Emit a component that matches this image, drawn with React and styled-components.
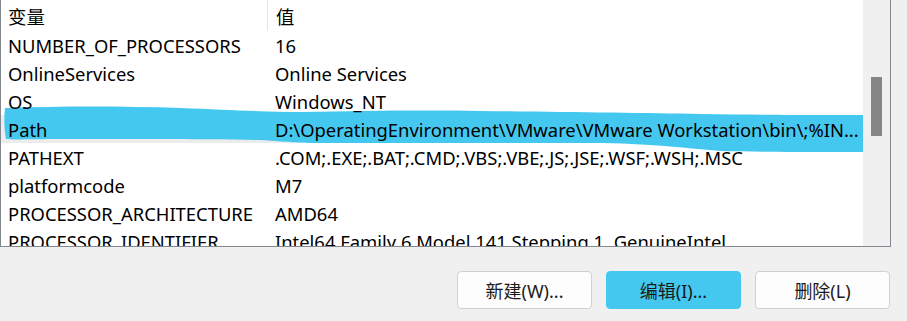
import React from 'react';
import styled, { createGlobalStyle } from 'styled-components';

const GlobalStyle = createGlobalStyle`
    body {
        margin: 0;
        background: #f0f0f0;
        font-family: "Noto Sans", "Noto Sans CJK SC", sans-serif;
        color: #000;
    }
`;

const Window = styled.div`
    display: flex;
    flex-direction: column;
    width: 907px;
    height: 321px;
    overflow: hidden;
    background: #f0f0f0;
`;

const ListBox = styled.div`
    display: flex;
    width: 891px;
    height: 247px;
    box-sizing: border-box;
    border: 1px solid #828790;
    border-top: none;
    background: #fff;
`;

const ListArea = styled.div`
    position: relative;
    flex: 1;
    overflow: hidden;
`;

const Row = styled.div`
    display: grid;
    grid-template-columns: 266px 1fr;
    height: ${ p => p.header ? 31 : 28 }px;
    align-items: center;
    font-size: 18.4px;
    white-space: nowrap;
    background: ${ p => p.selected ? '#ececec' : 'transparent' };
`;

const Cell = styled.div`
    position: relative;
    z-index: 1;
    padding-left: ${ p => p.value ? 8 : 7 }px;
    border-left: ${ p => p.divider ? '1px solid #e5e5e5' : 'none' };
    height: 100%;
    display: flex;
    align-items: center;
    overflow: hidden;
`;

const Brush = styled.svg`
    position: absolute;
    left: 0;
    top: 105px;
    width: 862px;
    height: 50px;
    z-index: 0;
`;

const Scrollbar = styled.div`
    width: 27px;
    background: #f0f0f0;
    display: flex;
    justify-content: center;
    padding-top: 77px;
`;

const Thumb = styled.div`
    width: 11px;
    height: 59px;
    background: #858585;
`;

const Footer = styled.div`
    display: flex;
    gap: 14px;
    padding: 24px 0 0 457px;
`;

const Button = styled.button`
    width: 135px;
    height: 38px;
    border: 1px solid ${ p => p.active ? '#44c8f0' : '#d0d0d0' };
    border-radius: 4px;
    background: ${ p => p.active ? '#44c8f0' : '#fdfdfd' };
    font-family: inherit;
    font-size: 18px;
    color: #1a1a1a;
    padding: 0;
`;

const rows = [
    ['NUMBER_OF_PROCESSORS', '16'],
    ['OnlineServices', 'Online Services'],
    ['OS', 'Windows_NT'],
    ['Path', 'D:\\OperatingEnvironment\\VMware\\VMware Workstation\\bin\\;%IN...'],
    ['PATHEXT', '.COM;.EXE;.BAT;.CMD;.VBS;.VBE;.JS;.JSE;.WSF;.WSH;.MSC'],
    ['platformcode', 'M7'],
    ['PROCESSOR_ARCHITECTURE', 'AMD64'],
    ['PROCESSOR_IDENTIFIER', 'Intel64 Family 6 Model 141 Stepping 1, GenuineIntel'],
];

export default function App() {
    return (
        <Window>
            <GlobalStyle />
            <ListBox>
                <ListArea>
                    <Brush viewBox="0 0 862 50" preserveAspectRatio="none">
                        <path
                            fill="#45c8f0"
                            d="M4 3 C60 1 120 1 180 3 C230 5 270 7 300 7 C360 6 420 5 480 6 C560 7 640 8 700 9 C780 10 830 10 862 10 L862 47 C820 47 760 47 720 46 C690 44 660 39 600 38 C520 38 420 38 320 38 C290 38 280 36 260 35 C200 34 120 34 60 34 C30 34 12 35 5 34 C3 24 3 12 4 3 Z"
                        />
                    </Brush>
                    <Row header>
                        <Cell>变量</Cell>
                        <Cell value divider>值</Cell>
                    </Row>
                    {rows.map(([name, value]) => (
                        <Row key={name} selected={name === 'Path'}>
                            <Cell>{name}</Cell>
                            <Cell value>{value}</Cell>
                        </Row>
                    ))}
                </ListArea>
                <Scrollbar>
                    <Thumb />
                </Scrollbar>
            </ListBox>
            <Footer>
                <Button>新建(W)...</Button>
                <Button active>编辑(I)...</Button>
                <Button>删除(L)</Button>
            </Footer>
        </Window>
    );
}
